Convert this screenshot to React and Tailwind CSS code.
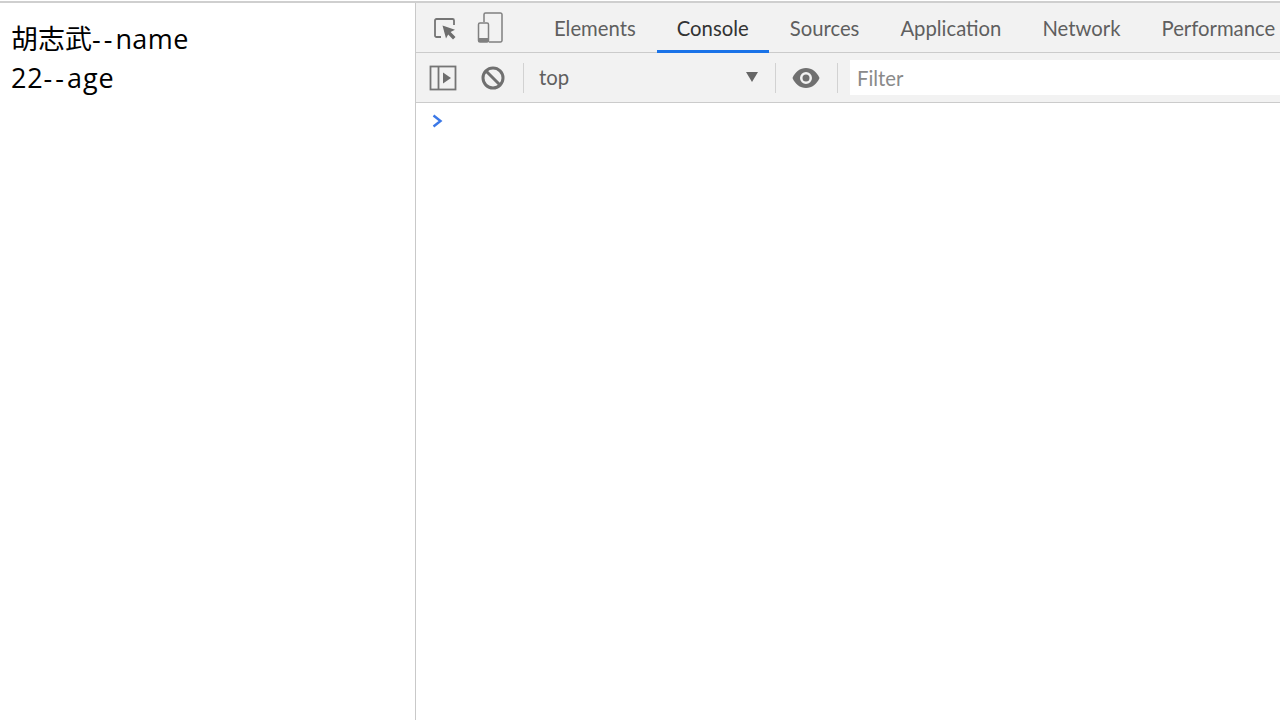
import React from 'react';

const tabs = [
  { label: 'Elements' },
  { label: 'Console', active: true },
  { label: 'Sources' },
  { label: 'Application' },
  { label: 'Network' },
  { label: 'Performance' },
];

function InspectIcon() {
  return (
    <svg width="26" height="26" viewBox="0 0 26 26" fill="none" className="shrink-0">
      <path d="M9 22H4.500a1.500 1.500 0 0 1-1.500-1.500V5.500A1.500 1.500 0 0 1 4.500 4h16A1.500 1.500 0 0 1 22 5.500V10" stroke="#757575" strokeWidth="1.800" />
      <path d="M10.500 10.500 L23 14.800 L18.600 17 L23.500 22 L21 24.500 L16.200 19.400 L14 23.500 Z" fill="#6e6e6e" />
    </svg>
  );
}

function DeviceIcon() {
  return (
    <svg width="28" height="32" viewBox="0 0 28 32" fill="none" className="shrink-0">
      <path d="M7 10V2.500A1.500 1.500 0 0 1 8.500 1h15A1.500 1.500 0 0 1 25 2.500v26a1.500 1.500 0 0 1-1.500 1.500H12" stroke="#808080" strokeWidth="1.500" />
      <rect x="1.500" y="11" width="10" height="19" rx="1.500" stroke="#808080" strokeWidth="1.500" />
      <rect x="1.500" y="26" width="10" height="4" fill="#808080" />
    </svg>
  );
}

function SidebarIcon() {
  return (
    <svg width="28" height="26" viewBox="0 0 28 26" fill="none" className="shrink-0">
      <rect x="1.500" y="1.500" width="25" height="23" stroke="#757575" strokeWidth="1.800" />
      <path d="M9.500 1.500v23" stroke="#757575" strokeWidth="1.800" />
      <path d="M14 7.500 L22 13 L14 18.500 Z" fill="#6e6e6e" />
    </svg>
  );
}

function BlockIcon() {
  return (
    <svg width="24" height="24" viewBox="0 0 24 24" fill="none" className="shrink-0">
      <circle cx="12" cy="12" r="10" stroke="#707070" strokeWidth="3" />
      <path d="M5.500 5.500 L18.500 18.500" stroke="#707070" strokeWidth="3" />
    </svg>
  );
}

function EyeIcon() {
  return (
    <svg width="28" height="20" viewBox="0 0 28 20" className="shrink-0">
      <path fillRule="evenodd" fill="#707070" d="M14 0C8 0 3 4 .5 10 3 16 8 20 14 20s11-4 13.500-10C25 4 20 0 14 0Zm0 16a6 6 0 1 1 0-12 6 6 0 0 1 0 12Zm0-9.500a3.500 3.500 0 1 0 0 7 3.500 3.500 0 0 0 0-7Z" />
    </svg>
  );
}

export default function App() {
  return (
    <div className="h-[720px] w-[1280px] overflow-hidden bg-white pt-px font-['Open_Sans','Noto_Sans_CJK_SC',sans-serif]">
      <div className="flex h-[719px] border-t-2 border-[#cfcfcf]">
        {/* page */}
        <div className="w-[416px] shrink-0 border-r border-[#c9c9c9] pl-[11px] pt-[16px] text-[27px] leading-[39px] text-black">
          <div className="whitespace-nowrap">胡志武<span className="tracking-[3px]">--</span><span className="tracking-[.4px]">name</span></div>
          <div className="whitespace-nowrap"><span className="tracking-[.8px]">22</span><span className="tracking-[3px]">--</span><span className="tracking-[1px]">age</span></div>
        </div>

        {/* devtools */}
        <div className="min-w-0 flex-1 font-['Lato',sans-serif]">
          <div className="flex h-[50px] items-center border-b border-[#cbcbcb] bg-[#f2f2f2] pl-[16px]">
            <InspectIcon />
            <div className="ml-[19px]"><DeviceIcon /></div>
            <div className="ml-[18px] h-[30px] w-px bg-[#d2d2d2]" />
            <div className="ml-[11px] flex h-full gap-px whitespace-nowrap text-[20.3px] text-[#5f5f5f]">
              {tabs.map((t) => (
                <div
                  key={t.label}
                  className={t.active
                    ? 'flex h-[50px] items-center border-b-[3px] border-[#1a73e8] px-[20px] pt-[3px] text-[#333]'
                    : 'flex h-[50px] items-center border-b-[3px] border-transparent px-[20px] pt-[3px]'}
                >
                  {t.label}
                </div>
              ))}
            </div>
          </div>
          <div className="flex h-[50px] items-center border-b border-[#cbcbcb] bg-[#f2f2f2] pl-[13px]">
            <SidebarIcon />
            <div className="ml-[24px]"><BlockIcon /></div>
            <div className="ml-[18px] h-[30px] w-px bg-[#d2d2d2]" />
            <div className="ml-[15px] flex w-[236px] items-center justify-between pr-[17px] text-[20.3px] text-[#5f5f5f]">
              <span>top</span>
              <span className="mt-[-2px] h-0 w-0 border-x-[6px] border-t-[10px] border-x-transparent border-t-[#666]" />
            </div>
            <div className="h-[30px] w-px bg-[#d2d2d2]" />
            <div className="ml-[16px]"><EyeIcon /></div>
            <div className="ml-[17px] h-[30px] w-px bg-[#d2d2d2]" />
            <div className="ml-[12px] flex h-[35px] flex-1 items-center bg-white pl-[7px] pt-[2px] text-[20.3px] text-[#8a8a8a]">Filter</div>
          </div>
          <div className="pl-[14px] pt-[6px]">
            <svg width="14" height="24" viewBox="0 0 14 24" fill="none">
              <path d="M3.500 6.500 L10.500 12 L3.500 17.500" stroke="#3b78e7" strokeWidth="2.400" />
            </svg>
          </div>
        </div>
      </div>
    </div>
  );
}
